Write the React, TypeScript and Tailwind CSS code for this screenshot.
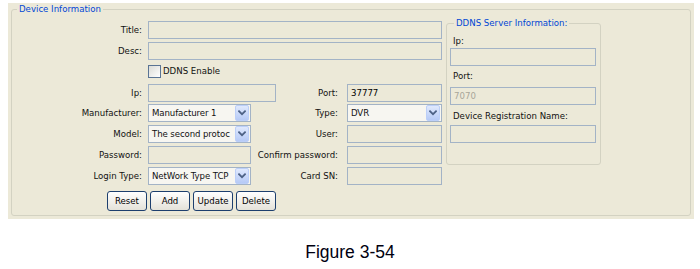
import React from "react";

function TextBox({ className, value, gray }: { className: string; value?: string; gray?: boolean }) {
  return (
    <div
      className={`h-[18px] border border-[#a3b3c6] bg-[#ece9d8] pl-[3px] flex items-center whitespace-nowrap overflow-hidden ${
        gray ? "text-[#a8a699]" : "text-black"
      } ${className}`}
    >
      {value}
    </div>
  );
}

function Chevron() {
  return (
    <svg width="8" height="6" viewBox="0 0 8 6" fill="none">
      <path d="M1 1.2 L4 4.2 L7 1.2" stroke="#4d6185" strokeWidth="1.7" strokeLinecap="square" />
    </svg>
  );
}

function Select({ className, value }: { className: string; value: string }) {
  return (
    <div className={`h-[18px] border border-[#a3b3c6] bg-[#f7f6f1] flex items-center pl-[3px] pr-px ${className}`}>
      <span className="flex-1 min-w-0 whitespace-nowrap tracking-[-0.1px]">{value}</span>
      <span className="ml-[1px] shrink-0 w-[14px] h-[16px] rounded-[2px] border border-[#bccff8] bg-linear-to-b from-[#e0e9fd] to-[#b6caf6] flex items-center justify-center">
        <Chevron />
      </span>
    </div>
  );
}

function Button({ label }: { label: string }) {
  return (
    <div className="w-[40px] h-[20px] rounded-[3px] border border-[#1d3f6e] bg-linear-to-b from-white to-[#e4e2d9] flex items-center justify-center text-black">
      {label}
    </div>
  );
}

function Label({ children, className }: { children: React.ReactNode; className: string }) {
  return <div className={`text-right whitespace-nowrap ${className}`}>{children}</div>;
}

export default function App() {
  return (
    <div className="w-[700px] min-h-[269px] bg-white font-['DejaVu_Sans',sans-serif] text-[8.6px] text-[#111]">
      <div className="ml-[8px] pt-[3px]">
        <div className="w-[686px] h-[216px] bg-[#ece9d8] px-[3px] pb-[3px]">
          <fieldset className="h-full border border-[#d3d2c2] rounded-[3px]">
            <legend className="ml-[5px] px-[2px] leading-[12px] text-[#0046d5]">Device Information</legend>
            <div className="flex items-start">
              <div className="w-[430px] pt-[6px] flex flex-col">
                <div className="flex items-center h-[18px]">
                  <Label className="w-[130px]">Title:</Label>
                  <TextBox className="ml-[6px] w-[294px]" />
                </div>
                <div className="flex items-center h-[18px] mt-[3px]">
                  <Label className="w-[130px]">Desc:</Label>
                  <TextBox className="ml-[6px] w-[294px]" />
                </div>
                <div className="flex items-start h-[18px] mt-[3px]">
                  <div className="w-[130px]" />
                  <div className="ml-[6px] mt-[2px] w-[13px] h-[13px] border border-[#5a7494] bg-linear-to-br from-[#dcdcd6] to-white" />
                  <div className="ml-[2px] mt-[2px] leading-[13px]">DDNS Enable</div>
                </div>
                <div className="flex items-center h-[18px] mt-[3px]">
                  <Label className="w-[130px]">Ip:</Label>
                  <TextBox className="ml-[6px] w-[128px]" />
                  <Label className="flex-1">Port:</Label>
                  <TextBox className="ml-[9px] w-[95px]" value="37777" />
                </div>
                <div className="flex items-center h-[18px] mt-[2px]">
                  <Label className="w-[130px]">Manufacturer:</Label>
                  <Select className="ml-[6px] w-[103px]" value="Manufacturer 1" />
                  <Label className="flex-1">Type:</Label>
                  <Select className="ml-[9px] w-[95px]" value="DVR" />
                </div>
                <div className="flex items-center h-[18px] mt-[3px]">
                  <Label className="w-[130px]">Model:</Label>
                  <Select className="ml-[6px] w-[103px]" value="The second protoc" />
                  <Label className="flex-1">User:</Label>
                  <TextBox className="ml-[9px] w-[95px]" />
                </div>
                <div className="flex items-center h-[18px] mt-[3px]">
                  <Label className="w-[130px]">Password:</Label>
                  <TextBox className="ml-[6px] w-[103px]" />
                  <Label className="flex-1">Confirm password:</Label>
                  <TextBox className="ml-[9px] w-[95px]" />
                </div>
                <div className="flex items-center h-[18px] mt-[3px]">
                  <Label className="w-[130px]">Login Type:</Label>
                  <Select className="ml-[6px] w-[103px]" value="NetWork Type TCP" />
                  <Label className="flex-1">Card SN:</Label>
                  <TextBox className="ml-[9px] w-[95px]" />
                </div>
                <div className="flex gap-[3px] ml-[95px] mt-[6px]">
                  <Button label="Reset" />
                  <Button label="Add" />
                  <Button label="Update" />
                  <Button label="Delete" />
                </div>
              </div>

              <fieldset className="ml-[4px] mt-[2px] w-[155px] border border-[#d3d2c2] rounded-[3px] pl-[3px] pr-[4px] pb-[21px]">
                <legend className="ml-[4px] px-[2px] leading-[12px] text-[#0046d5]">DDNS Server Information:</legend>
                <div className="mt-[6px] h-[12px] leading-[12px] pl-[3px]">Ip:</div>
                <TextBox className="mt-[1px] w-[146px]" />
                <div className="mt-[4px] h-[12px] leading-[12px] pl-[3px]">Port:</div>
                <TextBox className="mt-[5px] w-[146px]" value="7070" gray />
                <div className="mt-[5px] h-[12px] leading-[12px] pl-[3px]">Device Registration Name:</div>
                <TextBox className="mt-[3px] w-[146px]" />
              </fieldset>
            </div>
          </fieldset>
        </div>
      </div>
      <div className="mt-[23px] text-center font-['Liberation_Sans',sans-serif] text-[17.5px] leading-[20px] text-[#000010]">
        Figure 3-54
      </div>
    </div>
  );
}
